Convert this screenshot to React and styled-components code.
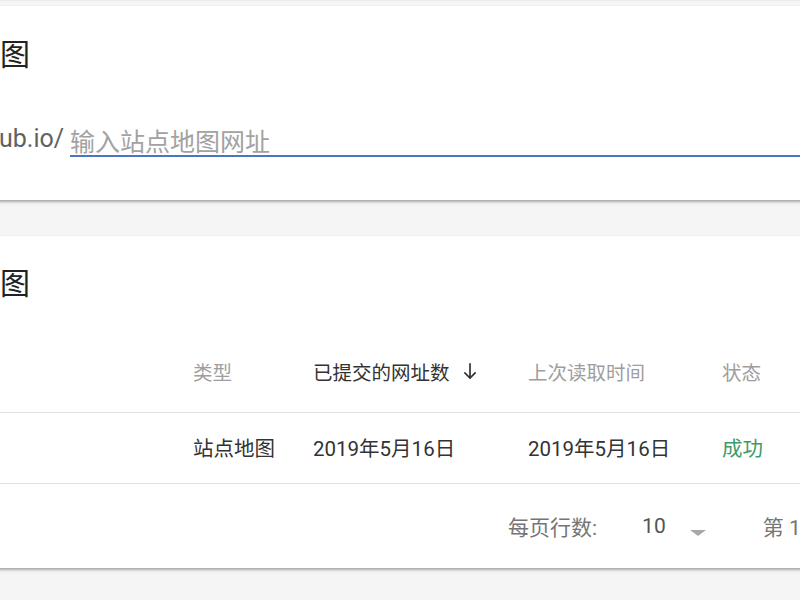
import React from "react";
import styled, { createGlobalStyle } from "styled-components";

const GlobalStyle = createGlobalStyle`
  html {
    overflow: hidden;
    background: #f5f5f5;
  }
  body {
    margin: 0;
    padding: 0;
    font-family: Roboto, "Noto Sans CJK SC", sans-serif;
    color: #333;
  }
`;

const Page = styled.div`
  padding: 5px 0 20px;
  border-top: 1px solid #ececec;
  overflow: hidden;
`;

const Card = styled.section`
  background: #fff;
  margin: ${(p) => (p.$first ? "0" : "36px")} -60px 0 -24px;
  padding: ${(p) => (p.$first ? "31px 60px 43px 24px" : "30px 60px 0 24px")};
  box-shadow: 0 2px 2px rgba(0, 0, 0, 0.22), 0 3px 4px -1px rgba(0, 0, 0, 0.1),
    0 0 1px rgba(0, 0, 0, 0.12);
`;

const Title = styled.h2`
  margin: 0;
  font-family: "Noto Sans CJK SC", sans-serif;
  font-size: 30px;
  line-height: 30px;
  font-weight: 400;
  color: #222;
  margin-bottom: ${(p) => p.$gap || 0}px;
`;

const InputRow = styled.div`
  display: flex;
  align-items: flex-start;
  margin-top: 58px;
`;

const Prefix = styled.span`
  font-size: 25px;
  line-height: 28px;
  color: #616161;
  margin-left: -1px;
`;

const UrlInput = styled.input`
  flex: 1;
  margin-left: 6px;
  border: none;
  border-bottom: 2px solid #4a76c0;
  padding: 0;
  height: 30px;
  font-family: "Noto Sans CJK SC", sans-serif;
  font-size: 25px;
  line-height: 30px;
  color: #333;
  outline: none;
  background: transparent;
  &::placeholder {
    color: #a2a2a2;
  }
`;

const Row = styled.div`
  display: grid;
  grid-template-columns: 193px 120px 215px 194px 1fr;
  align-items: center;
  height: ${(p) => p.$h}px;
  padding-bottom: ${(p) => p.$lift || 0}px;
  border-top: ${(p) => (p.$line ? "1px solid #e0e0e0" : "none")};
  box-sizing: border-box;
`;

const HeadCell = styled.div`
  display: flex;
  align-items: center;
  gap: 14px;
  font-family: "Noto Sans CJK SC", sans-serif;
  font-size: 19.5px;
  color: ${(p) => (p.$active ? "#333" : "#9e9e9e")};
`;

const Cell = styled.div`
  font-family: Roboto, "Noto Sans CJK SC", sans-serif;
  font-size: 20.5px;
  color: ${(p) => p.$color || "#333"};
  white-space: nowrap;
`;

const Footer = styled.div`
  display: flex;
  align-items: center;
  height: 85px;
  border-top: 1px solid #e0e0e0;
  box-sizing: border-box;
  padding-left: 508px;
  font-family: Roboto, "Noto Sans CJK SC", sans-serif;
  font-size: 21px;
  color: #757575;
  white-space: nowrap;
`;

const PerPage = styled.div`
  display: flex;
  align-items: center;
  margin-left: 45px;
  color: #555;
  font-size: 21px;
`;

const Caret = styled.span`
  display: inline-block;
  width: 0;
  height: 0;
  margin: 14px 0 0 24px;
  border-left: 8px solid transparent;
  border-right: 8px solid transparent;
  border-top: 6px solid #a8a8a8;
`;

const Range = styled.span`
  margin-left: 57px;
`;

function DownArrow() {
  return (
    <svg width="12" height="17" viewBox="0 0 12 17" fill="none">
      <path
        d="M6 1v14M1 10l5 5 5-5"
        stroke="#333"
        strokeWidth="1.7"
        strokeLinecap="square"
      />
    </svg>
  );
}

export default function App() {
  return (
    <Page>
      <GlobalStyle />
      <Card $first>
        <Title>图</Title>
        <InputRow>
          <Prefix>ub.io/</Prefix>
          <UrlInput type="text" placeholder="输入站点地图网址" />
        </InputRow>
      </Card>

      <Card>
        <Title $gap={34}>图</Title>
        <Row $h={82}>
          <div />
          <HeadCell>类型</HeadCell>
          <HeadCell $active>
            已提交的网址数
            <DownArrow />
          </HeadCell>
          <HeadCell>上次读取时间</HeadCell>
          <HeadCell>状态</HeadCell>
        </Row>
        <Row $h={71} $lift={3} $line>
          <div />
          <Cell>站点地图</Cell>
          <Cell>2019年5月16日</Cell>
          <Cell>2019年5月16日</Cell>
          <Cell $color="#3d9a6c">成功</Cell>
        </Row>
        <Footer>
          <span>每页行数:</span>
          <PerPage>
            10
            <Caret />
          </PerPage>
          <Range>第 1</Range>
        </Footer>
      </Card>
    </Page>
  );
}
